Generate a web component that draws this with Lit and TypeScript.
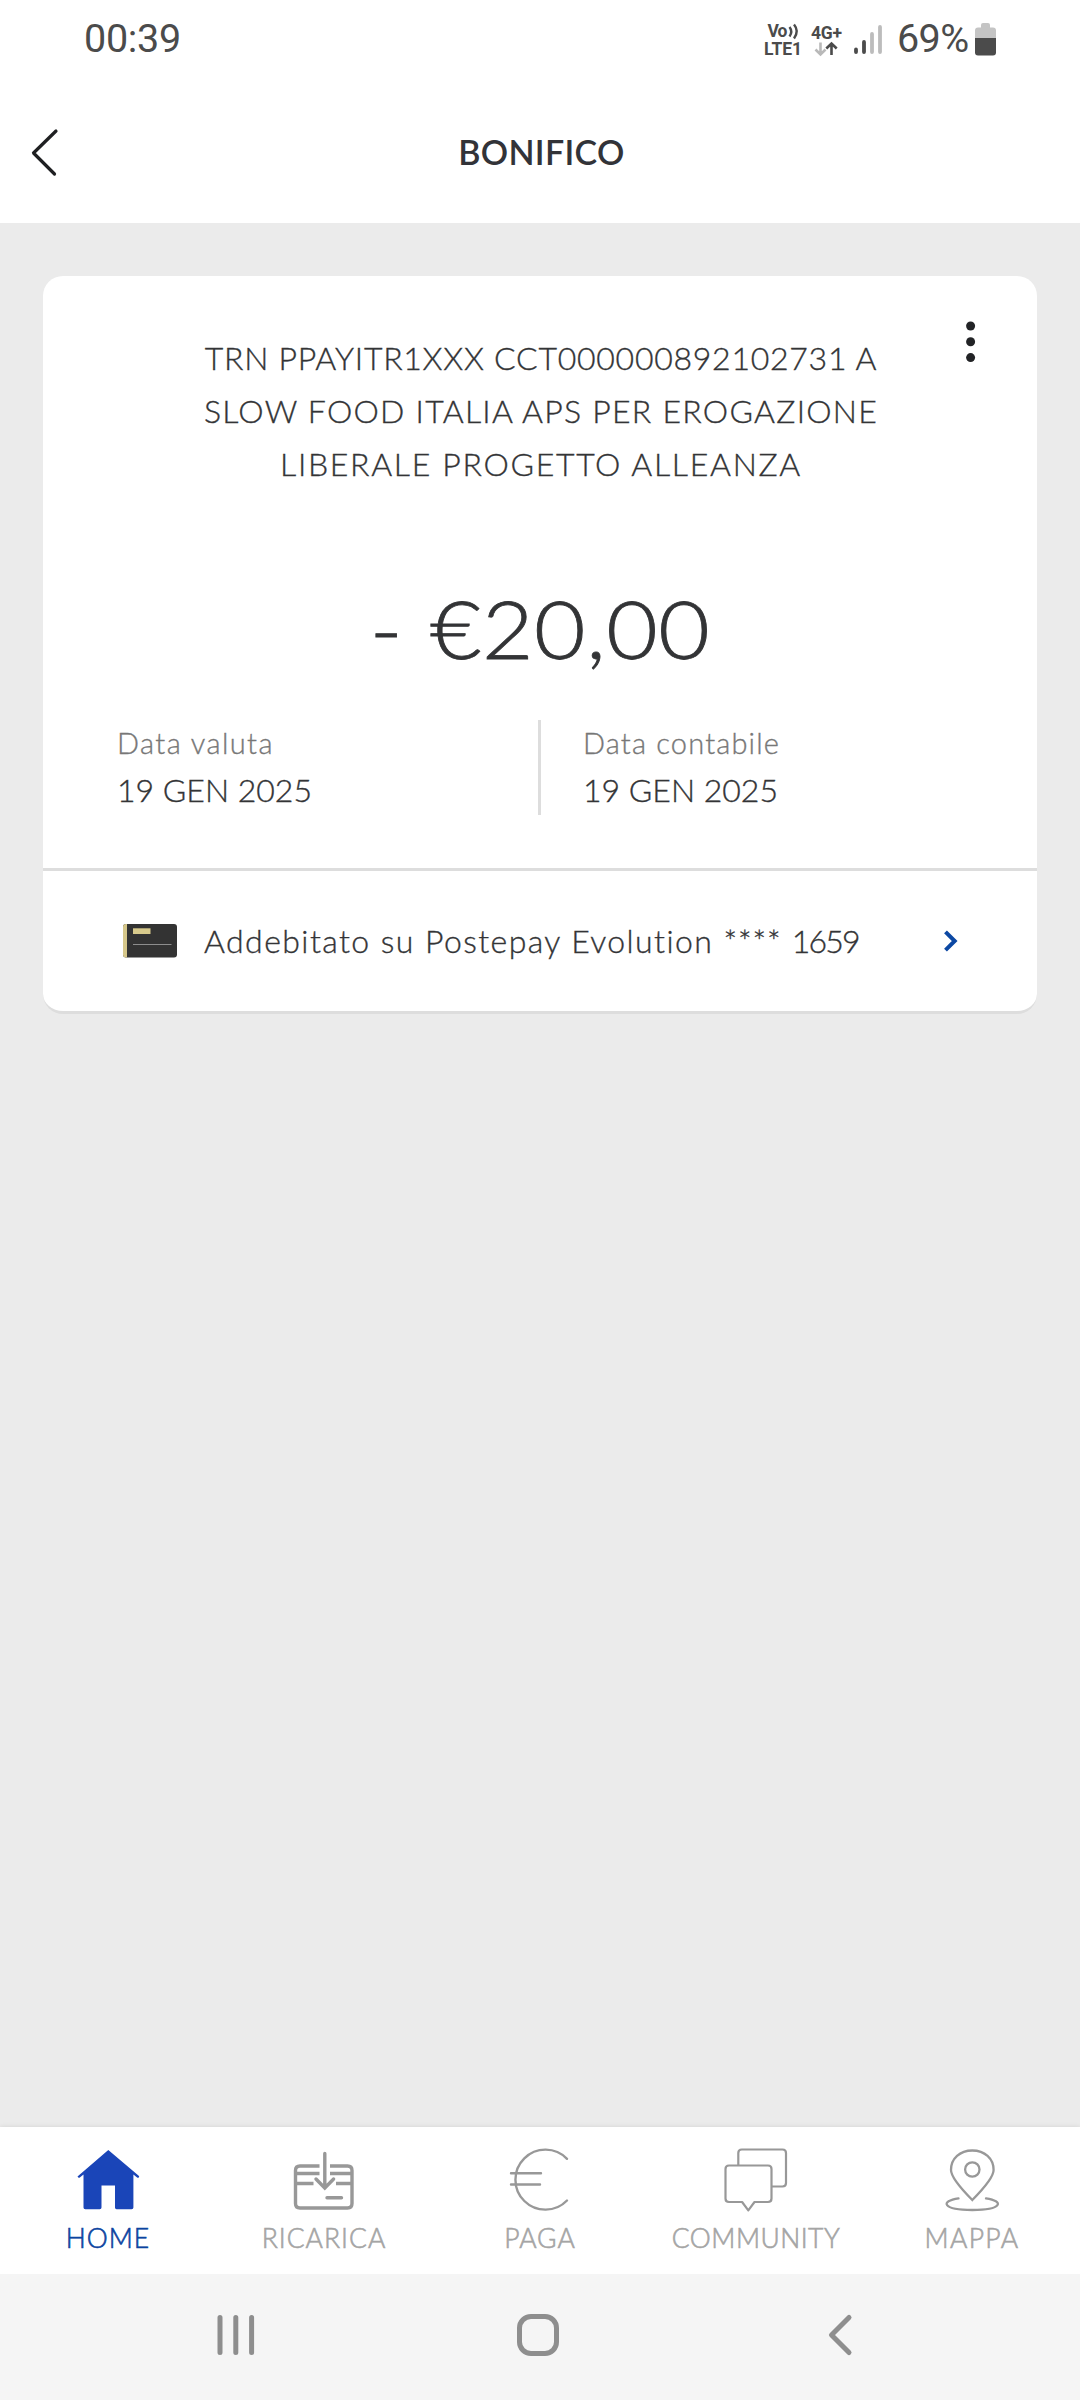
import { LitElement, html, css, svg } from "lit";
import { customElement, property } from "lit/decorators.js";

@customElement("status-bar")
class StatusBar extends LitElement {
  static styles = css`
    :host { display: flex; justify-content: space-between; height: 77px; box-sizing: border-box; padding: 0 83px 0 84px; color: #4b4b4b; font-family: Roboto, sans-serif; }
    .time, .pct { font-size: 39.5px; line-height: 77px; letter-spacing: -0.3px; white-space: nowrap; }
    .right { display: flex; }
    .icons { display: block; width: 134px; height: 77px; }
    .small { font-family: Roboto, sans-serif; font-weight: 700; font-size: 17.5px; fill: #4b4b4b; }
    .pct { width: 77px; letter-spacing: -0.6px; }
    .battery { display: block; width: 23px; height: 77px; }
  `;
  render() {
    return html`
      <div class="time">00:39</div>
      <div class="right">
        <svg class="icons" viewBox="763 0 134 77">
          <text class="small" x="767.5" y="37" textLength="20">Vo</text>
          <g fill="none" stroke="#4b4b4b" stroke-width="2.4">
            <path d="M789.5 27q3.500 4.500 0 9.500M794 24.500q5.500 6.500 0 14"/>
          </g>
          <text class="small" x="764" y="55" textLength="38">LTE1</text>
          <text class="small" x="811" y="38.500" textLength="31">4G+</text>
          <g fill="none" stroke-width="2.6">
            <path stroke="#b9b9b9" d="M820.500 42.500V54M815.500 49.500l5 5 5-5"/>
            <path stroke="#4b4b4b" d="M831.500 55V44M826.300 48.500l5.200-5 5.200 5"/>
          </g>
          <g stroke-width="3.800" stroke-linecap="round">
            <path stroke="#4b4b4b" d="M856 49.500V52M864 42V52"/>
            <path stroke="#bcbcbc" d="M872 34V52M880 27V52"/>
          </g>
        </svg>
        <div class="pct">69%</div>
        <svg class="battery" viewBox="974 0 23 77">
          <path fill="#c4c4c4" d="M975 38V30.500q0-3 3-3h3v-2.500q0-2 2-2h5q2 0 2 2v2.500h3q3 0 3 3V38z"/>
          <path fill="#4b4b4b" d="M975 38h21v14.500q0 3-3 3h-15q-3 0-3-3z"/>
        </svg>
      </div>`;
  }
}

@customElement("page-header")
class PageHeader extends LitElement {
  @property() heading = "";
  static styles = css`
    :host { display: grid; box-sizing: border-box; grid-template-columns: 88px 1fr 88px; align-items: center; height: 146px; padding-top: 4px; font-family: Lato, sans-serif; }
    .back { display: block; width: 88px; height: 60px; }
    .heading { padding-left: 3px; text-align: center; color: #323338; font-size: 34px; line-height: 40px; font-weight: 600; letter-spacing: 0.3px; }
  `;
  render() {
    return html`
      <svg class="back" viewBox="0 122 88 60"><path d="M56 131L33.500 153L54.500 174" fill="none" stroke="#1f2022" stroke-width="3.200" stroke-linecap="round" stroke-linejoin="round"/></svg>
      <div class="heading">${this.heading}</div>`;
  }
}

@customElement("movement-card")
class MovementCard extends LitElement {
  static styles = css`
    :host { display: block; box-sizing: border-box; height: 738px; background: #fff; border-radius: 20px; overflow: hidden; border-bottom: 3px solid #ddd; font-family: Lato, sans-serif; font-weight: 300; color: #333436; -webkit-text-stroke: 0.35px currentColor; }
    .top { display: grid; grid-template-columns: 132px 1fr 132px; height: 290px; }
    .desc { grid-column: 2; padding: 55px 0 0 2px; text-align: center; font-size: 32px; line-height: 53px; }
    .line { display: block; white-space: nowrap; }
    .l1 { letter-spacing: 0.74px; }
    .l2 { letter-spacing: 1.25px; }
    .l3 { letter-spacing: 1.68px; }
    .menu { display: block; width: 132px; height: 120px; }
    .amount { height: 154px; text-align: center; font-size: 80px; line-height: 124px; letter-spacing: 0.5px; word-spacing: 2px; white-space: pre; transform: scaleX(1.11); -webkit-text-stroke-width: 0.8px; }
    .dates { display: flex; height: 95px; padding-left: 74px; }
    .date { display: flex; flex-direction: column; box-sizing: border-box; width: 421px; }
    .date + .date { border-left: 3px solid #ddd; padding-left: 42px; }
    .label { color: #777; font-size: 29px; line-height: 46px; letter-spacing: 1.42px; }
    .lb { letter-spacing: 1.18px; }
    .value { font-size: 32px; line-height: 48px; }
    .account { display: flex; align-items: center; height: 140px; margin-top: 53px; border-top: 3px solid #ddd; padding-left: 80px; font-size: 32px; }
    .mini { width: 54px; height: 34px; display: block; }
    .account-text { width: 766px; box-sizing: border-box; padding: 0 0 2px 27px; letter-spacing: 1.43px; white-space: nowrap; }
    .stars { letter-spacing: 0.9px; }
    .digits { letter-spacing: -1.8px; }
    .go { width: 16px; height: 24px; display: block; }
  `;
  render() {
    return html`
      <div class="top">
        <div class="desc">
          <span class="line l1">TRN PPAYITR1XXX CCT000000892102731 A</span>
          <span class="line l2">SLOW FOOD ITALIA APS PER EROGAZIONE</span>
          <span class="line l3">LIBERALE PROGETTO ALLEANZA</span>
        </div>
        <svg class="menu" viewBox="905 276 132 120" fill="#222326"><circle cx="970.600" cy="326" r="4.500"/><circle cx="970.600" cy="341.800" r="4.500"/><circle cx="970.600" cy="357.600" r="4.500"/></svg>
      </div>
      <div class="amount">- €20,00</div>
      <div class="dates">
        <div class="date"><span class="label">Data valuta</span><span class="value">19 GEN 2025</span></div>
        <div class="date"><span class="label lb">Data contabile</span><span class="value">19 GEN 2025</span></div>
      </div>
      <div class="account">
        <svg class="mini" viewBox="0 0 54 34">
          <rect width="54" height="33.500" rx="3" fill="#333"/>
          <path d="M4 0H3Q0 0 0 3v27.500q0 3 3 3h1z" fill="#d6c78a"/>
          <rect x="10" y="4.300" width="17.500" height="5.700" fill="#d8ca8c"/>
          <path d="M10 20.500h38.500" stroke="#8d8d8d"/>
        </svg>
        <span class="account-text">Addebitato su Postepay Evolution <span class="stars">****</span> <span class="digits">1659</span></span>
        <svg class="go" viewBox="0 0 16 24"><path d="M2.500 2.800L11.700 12l-9.200 9.200" fill="none" stroke="#0c48a3" stroke-width="4"/></svg>
      </div>`;
  }
}

const tabIcons: Record<string, unknown> = {
  home: svg`<path fill="#1a45b8" d="M108.300 2149.600L139 2175.500q.6 1.200-.6 1.800h-1l-4-3.200V2207q0 1.800-1.800 1.800h-15q-1.600 0-1.600-1.800v-22h-13.500v22q0 1.800-1.800 1.800H85.300q-1.800 0-1.800-1.800v-32.900l-4 3.200q-1.400.3-2-1.300z"/>`,
  ricarica: svg`<g fill="none" stroke="#989898" stroke-width="3.400"><path d="M319.500 2165.500H300q-4.500 0-4.500 4.500v33q0 4.500 4.500 4.500h47.500q4.500 0 4.500-4.500v-33q0-4.500-4.500-4.500H330M297 2173h22.500M330 2173h21.500M297 2183h16.500M336 2183h16"/><path d="M324.800 2153v34M316 2178.500l8.800 9 8.800-9M327 2197.200h14.500" stroke-linecap="round"/></g>`,
  paga: svg`<g fill="none" stroke="#989898" stroke-width="2.400" stroke-linecap="round"><path d="M567 2158.300A30 30 0 1 0 567 2200M511 2172.800h30M511 2184h29"/></g>`,
  community: svg`<g fill="none" stroke="#989898" stroke-width="2.200" stroke-linejoin="round"><path d="M738.300 2164.500V2152.500q0-3.500 3.500-3.500h40.700q3.500 0 3.500 3.500v30q0 3.500-3.500 3.500H772M729 2165h39q3.500 0 3.500 3.500v29.500q0 3.500-3.500 3.500H754.500l-6.200 8.300-6.200-8.300H729q-3.500 0-3.500-3.500v-29.500q0-3.500 3.500-3.500z"/></g>`,
  mappa: svg`<g fill="none" stroke="#989898" stroke-width="2.300" stroke-linecap="round"><path d="M972.300 2199.500Q951 2178 951 2169.500C951 2158 960 2150 972.300 2150S993.600 2158 993.600 2169.500Q993.600 2178 972.300 2199.500z"/><circle cx="972.300" cy="2169" r="7.200"/><path d="M958.500 2197.800C940 2200.500 942 2209.500 972.300 2209.500S1004.500 2200.500 986 2197.800"/></g>`,
};

@customElement("tab-bar")
class TabBar extends LitElement {
  static styles = css`
    :host { display: grid; grid-template-columns: repeat(5, 216px); height: 147px; background: #fff; box-shadow: 0 0 5px rgba(0, 0, 0, 0.1); font-family: Lato, sans-serif; font-weight: 300; -webkit-text-stroke: 0.6px currentColor; }
    .tab { display: flex; flex-direction: column; align-items: center; color: #a5a5a5; font-size: 26.5px; letter-spacing: 1px; }
    .active { color: #0c44a0; }
    .icon { display: block; width: 216px; height: 94px; }
    .name { line-height: 34px; white-space: nowrap; }
    .community { letter-spacing: 0.5px; }
    .mappa { letter-spacing: 1.4px; }
  `;
  render() {
    return html`${["home", "ricarica", "paga", "community", "mappa"].map(
      (name, i) => html`<div class="tab ${i === 0 ? "active" : ""}">
        <svg class="icon" viewBox="${i * 216} 2126.5 216 94">${tabIcons[name]}</svg>
        <span class="name ${name}">${name.toUpperCase()}</span>
      </div>`,
    )}`;
  }
}

@customElement("system-nav")
class SystemNav extends LitElement {
  static styles = css`
    :host { display: block; height: 126px; background: #f5f5f5; }
    .keys { display: block; width: 1080px; height: 126px; }
  `;
  render() {
    return html`<svg class="keys" viewBox="0 2274 1080 126" fill="none" stroke="#8e8e8e" stroke-width="5" stroke-linecap="round" stroke-linejoin="round">
      <path d="M220 2317.500V2352.500M235.800 2317.500V2352.500M251.600 2317.500V2352.500"/>
      <rect x="519.500" y="2316.500" width="37" height="37" rx="11.500"/>
      <path d="M849 2317.500L831.500 2335L849 2352.500"/>
    </svg>`;
  }
}

@customElement("app-root")
class AppRoot extends LitElement {
  static styles = css`
    :host { display: flex; flex-direction: column; width: 1080px; height: 2400px; background: #fff; }
    .content { flex: 1; background: #ebebeb; padding: 53px 43px 0; }
  `;
  render() {
    return html`
      <status-bar></status-bar>
      <page-header heading="BONIFICO"></page-header>
      <main class="content"><movement-card></movement-card></main>
      <tab-bar></tab-bar>
      <system-nav></system-nav>`;
  }
}
